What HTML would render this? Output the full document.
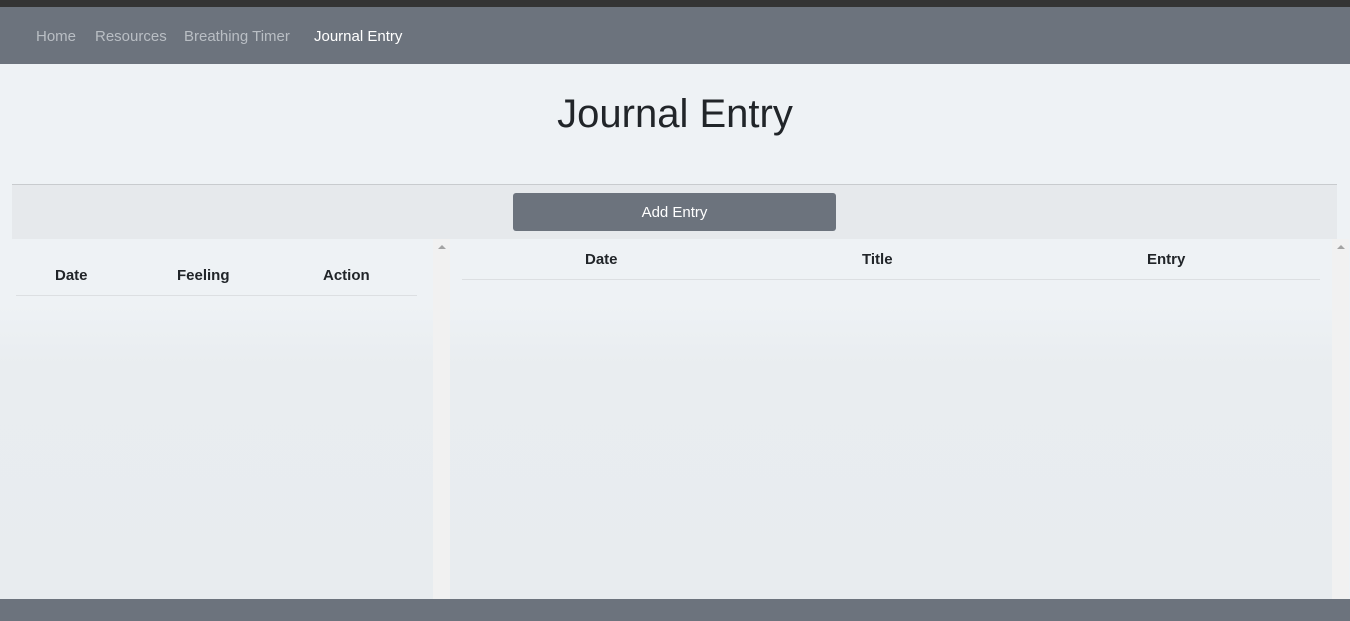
<!DOCTYPE html>
<html><head><style>
*{margin:0;padding:0;box-sizing:border-box}
body{width:1350px;height:621px;overflow:hidden;background:#eef2f5;font-family:"Liberation Sans",sans-serif;position:relative}
.top{position:absolute;top:0;left:0;width:1350px;height:7px;background:#343434}
.nav{position:absolute;top:7px;left:0;width:1350px;height:57px;background:#6c737d}
.nav span{position:absolute;top:21px;font-size:15px;color:#b9bec4}
h1{position:absolute;top:92px;left:0;width:1350px;text-align:center;font-weight:normal;font-size:40px;color:#212529}
.band{position:absolute;top:184px;left:12px;width:1325px;height:55px;background:#e6e9ec;border-top:1px solid #c8cbce}
.btn{position:absolute;top:193px;left:513px;width:323px;height:38px;background:#6c737d;border-radius:3px;color:#fff;font-size:15px;text-align:center;line-height:40px}
.panel{position:absolute;top:239px;height:360px;background:linear-gradient(#eef2f5 0%,#eef2f5 18%,#e9edf0 35%,#e8ecef 100%)}
.sb{position:absolute;top:239px;height:360px;width:17px;background:#f1f1f1}
.sb:before{content:"";position:absolute;top:6px;left:5px;border:4px solid transparent;border-bottom:4px solid #a3a3a3;border-top:0}
.th{position:absolute;font-size:15px;font-weight:bold;color:#212529}
.line{position:absolute;height:1px;background:#dcdfe2}
.foot{position:absolute;top:599px;left:0;width:1350px;height:22px;background:#6c737d}
</style></head><body>
<div class="top"></div>
<div class="nav">
<span style="left:36px">Home</span>
<span style="left:95px">Resources</span>
<span style="left:184px">Breathing Timer</span>
<span style="left:314px;color:#fff">Journal Entry</span>
</div>
<h1>Journal Entry</h1>
<div class="band"></div>
<div class="btn">Add Entry</div>
<div class="panel" style="left:0;width:433px"></div>
<div class="sb" style="left:433px"></div>
<div class="panel" style="left:450px;width:882px"></div>
<div class="sb" style="left:1332px"></div>
<div class="th" style="left:55px;top:267px">Date</div>
<div class="th" style="left:177px;top:267px">Feeling</div>
<div class="th" style="left:323px;top:267px">Action</div>
<div class="line" style="left:16px;top:295px;width:401px"></div>
<div class="th" style="left:585px;top:251px">Date</div>
<div class="th" style="left:862px;top:251px">Title</div>
<div class="th" style="left:1147px;top:251px">Entry</div>
<div class="line" style="left:462px;top:279px;width:858px"></div>
<div class="foot"></div>
</body></html>
